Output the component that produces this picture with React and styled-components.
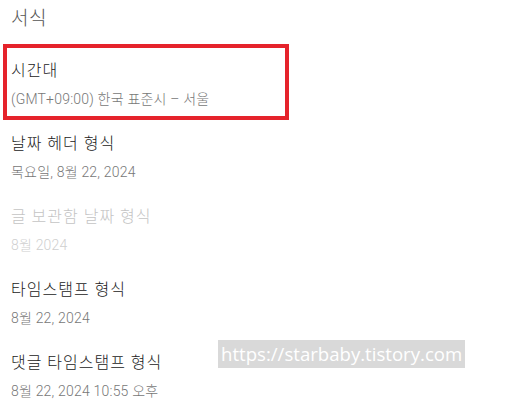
import React from "react";
import styled, { createGlobalStyle } from "styled-components";

const GlobalStyle = createGlobalStyle`
	html, body {
		margin: 0;
		padding: 0;
		background: #fff;
	}
	body {
		font-family: Roboto, "Noto Sans CJK KR", sans-serif;
	}
`;

const items = [
	{ title: "시간대", value: "(GMT+09:00) 한국 표준시 – 서울", selected: true },
	{ title: "날짜 헤더 형식", value: "목요일, 8월 22, 2024" },
	{ title: "글 보관함 날짜 형식", value: "8월 2024", disabled: true },
	{ title: "타임스탬프 형식", value: "8월 22, 2024" },
	{ title: "댓글 타임스탬프 형식", value: "8월 22, 2024 10:55 오후" }
];

const App = () => (
	<Page>
		<GlobalStyle />
		<Heading>서식</Heading>
		<List>
			{items.map(item => (
				<Item key={item.title} selected={item.selected}>
					<Title disabled={item.disabled}>{item.title}</Title>
					<Value disabled={item.disabled}>{item.value}</Value>
				</Item>
			))}
		</List>
		<Watermark>https://starbaby.tistory.com</Watermark>
	</Page>
);

const Page = styled.div`
	position: relative;
	width: 505px;
	height: 410px;
	padding: 7px 0 0 3px;
	box-sizing: border-box;
	overflow: hidden;
`;

const Heading = styled.h2`
	margin: 0 0 13px 8px;
	font-size: 19px;
	line-height: 24px;
	font-weight: 300;
	letter-spacing: 0.5px;
	color: #555;
`;

const List = styled.div`
	display: flex;
	flex-direction: column;
`;

const Item = styled.div`
	width: 286px;
	box-sizing: border-box;
	height: 76px;
	margin-bottom: -3px;
	padding: 11px 4px 0;
	border: 4px solid ${({ selected }) => (selected ? "#e5232b" : "transparent")};
`;

const Title = styled.div`
	font-size: 16px;
	line-height: 24px;
	font-weight: 300;
	letter-spacing: 1px;
	color: ${({ disabled }) => (disabled ? "#c4c4c4" : "#222")};
`;

const Value = styled.div`
	margin-top: 6px;
	font-size: 14px;
	line-height: 20px;
	font-weight: 300;
	letter-spacing: 0.2px;
	color: ${({ disabled }) => (disabled ? "#cfcfcf" : "#777")};
`;

const Watermark = styled.div`
	position: absolute;
	left: 218px;
	top: 340px;
	width: 247px;
	height: 28px;
	background: #d9d9d9;
	color: #fff;
	font-family: "Open Sans", sans-serif;
	font-size: 18.6px;
	font-weight: 500;
	line-height: 28px;
	padding-left: 3px;
	box-sizing: border-box;
	white-space: nowrap;
	overflow: hidden;
`;

export default App;
